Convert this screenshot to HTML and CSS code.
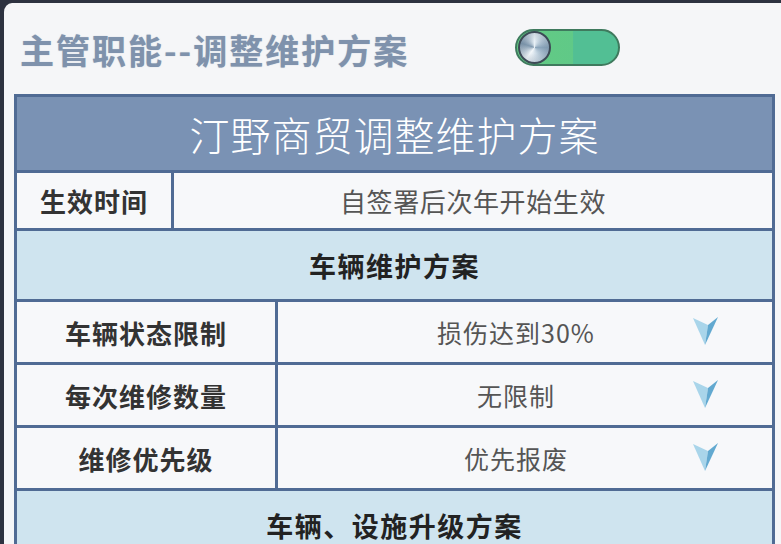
FILE: index.html
```html
<!DOCTYPE html>
<html lang="zh-CN">
<head>
<meta charset="utf-8">
<title>主管职能--调整维护方案</title>
<link rel="stylesheet" href="styles.css">
</head>
<body>
<div class="screen">
  <div class="topbar">
    <div class="title">主管职能--调整维护方案</div>
    <div class="toggle"><span class="knob"></span></div>
  </div>
  <div class="tbl">
    <div class="row head">汀野商贸调整维护方案</div>
    <div class="row r2">
      <div class="cell lab lab-s">生效时间</div>
      <div class="cell val-plain">自签署后次年开始生效</div>
    </div>
    <div class="row sec">车辆维护方案</div>
    <div class="row opt">
      <div class="cell lab lab-w">车辆状态限制</div>
      <div class="cell sel"><span class="v">损伤达到30%</span><svg class="arrow" viewBox="0 0 25 28"><polygon points="0,1 15,8 12,28" fill="#a9d5ea"/><polygon points="15,8 25,0 12,28" fill="#62a9d0"/></svg></div>
    </div>
    <div class="row opt">
      <div class="cell lab lab-w">每次维修数量</div>
      <div class="cell sel"><span class="v">无限制</span><svg class="arrow" viewBox="0 0 25 28"><polygon points="0,1 15,8 12,28" fill="#a9d5ea"/><polygon points="15,8 25,0 12,28" fill="#62a9d0"/></svg></div>
    </div>
    <div class="row opt">
      <div class="cell lab lab-w">维修优先级</div>
      <div class="cell sel"><span class="v">优先报废</span><svg class="arrow" viewBox="0 0 25 28"><polygon points="0,1 15,8 12,28" fill="#a9d5ea"/><polygon points="15,8 25,0 12,28" fill="#62a9d0"/></svg></div>
    </div>
    <div class="row sec">车辆、设施升级方案</div>
  </div>
</div>
</body>
</html>
```
FILE: styles.css
```css
html, body {
  margin: 0;
  padding: 0;
}
body {
  background: #2d3240;
  width: 781px;
  height: 544px;
  overflow: hidden;
  font-family: "Noto Sans CJK SC", "Noto Sans", sans-serif;
}
.screen {
  box-sizing: border-box;
  height: 544px;
  border-top: 3px solid #2d3240;
  border-left: 4px solid #2d3240;
  border-top-left-radius: 12px;
  background: #f5f6f8;
  overflow: hidden;
}
.topbar {
  height: 91px;
  display: grid;
  grid-template-columns: 495px 105px;
  align-items: center;
  padding-left: 16px;
}
.title {
  font-size: 34px;
  font-weight: 700;
  color: #7f92ac;
  letter-spacing: 2px;
  white-space: nowrap;
  line-height: 40px;
  padding-top: 2px;
  text-shadow: 0 0 1px rgba(125,144,170,0.6);
}
.toggle {
  box-sizing: border-box;
  width: 105px;
  height: 37px;
  border-radius: 19px;
  border: 2px solid #3f7a5e;
  background: linear-gradient(90deg, #63cb84 0%, #60c987 55%, #52bf94 56%, #52bf94 100%);
  display: flex;
  align-items: center;
  padding-left: 1px;
  margin-top: -3px;
}
.knob {
  box-sizing: border-box;
  width: 33px;
  height: 33px;
  border-radius: 50%;
  border: 2px solid #3d4a56;
  background:
    radial-gradient(circle at 50% 50%, rgba(255,255,255,0.0) 0 30%, rgba(60,80,100,0.25) 100%),
    conic-gradient(from 0deg, #e8f0f6, #8aa4ba 25%, #c9d8e4 45%, #f4f8fb 60%, #7f98ae 80%, #e8f0f6);
}
.tbl {
  box-sizing: border-box;
  margin-left: 10px;
  width: 761px;
  border: 3px solid #506b94;
  border-bottom: none;
}
.row {
  box-sizing: border-box;
  display: flex;
  border-top: 3px solid #506b94;
}
.row:first-child {
  border-top: none;
}
.head {
  height: 73px;
  background: #7a92b4;
  color: #ffffff;
  font-size: 40px;
  font-weight: 300;
  justify-content: center;
  align-items: center;
  letter-spacing: 1px;
}
.r2 {
  height: 58px;
  background: #f7f8fa;
}
.sec {
  height: 71px;
  background: #cfe4ef;
  justify-content: center;
  align-items: center;
  font-size: 27px;
  font-weight: 700;
  color: #222;
  letter-spacing: 1.5px;
}
.opt {
  height: 63px;
  background: #f7f8fa;
}
.cell {
  box-sizing: border-box;
  display: flex;
  align-items: center;
  justify-content: center;
}
.lab {
  font-size: 26px;
  font-weight: 700;
  color: #333;
  letter-spacing: 1px;
}
.lab-s {
  width: 154px;
}
.lab-w {
  width: 258px;
}
.val-plain {
  flex: 1;
  border-left: 3px solid #506b94;
  font-size: 26px;
  color: #555;
  letter-spacing: 0.6px;
}
.sel {
  flex: 1;
  border-left: 3px solid #506b94;
  justify-content: flex-start;
}
.v {
  flex: 1;
  text-align: center;
  padding-left: 61px;
  font-size: 25px;
  color: #555;
  letter-spacing: 1px;
}
.arrow {
  width: 25px;
  height: 28px;
  margin-right: 54px;
  margin-top: -2px;
}
```
